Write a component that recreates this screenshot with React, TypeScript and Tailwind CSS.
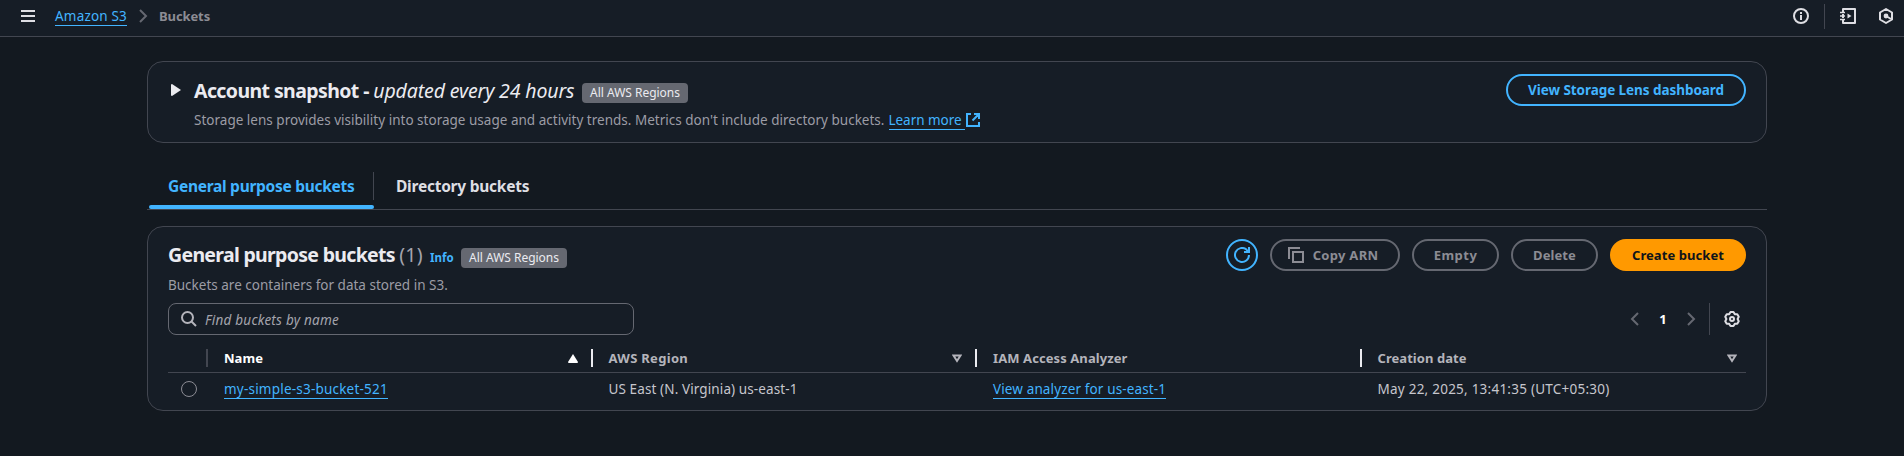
import React from "react";

const svg = "block shrink-0 fill-none stroke-current stroke-2";

function Badge() {
  return (
    <span className="flex h-5 w-[106px] items-center justify-center rounded bg-[#656871] text-xs tracking-[-0.02px] text-[#ebebf0]">
      All AWS Regions
    </span>
  );
}

function Chevron({ left }: { left?: boolean }) {
  return (
    <svg width="16" height="16" viewBox="0 0 16 16" className={svg}>
      <path d={left ? "M11 2 5 8l6 6" : "M5 2l6 6-6 6"} />
    </svg>
  );
}

function TopBar() {
  return (
    <header className="flex h-[37px] items-start justify-between border-b border-[#424650] bg-[#161d26]">
      <div className="flex h-8 items-center pl-5">
        <svg width="16" height="16" viewBox="0 0 16 16" className={`${svg} text-[#dedee3]`}>
          <path d="M1 3h14M1 8h14M1 13h14" />
        </svg>
        <a className="mt-[2px] ml-[19px] h-[18px] w-[72px] border-b border-[#42b4ff] text-[13.5px] leading-[16px] tracking-[0.19px] whitespace-nowrap text-[#42b4ff]">
          Amazon S3
        </a>
        <span className="ml-2 text-[#656871]"><Chevron /></span>
        <span className="ml-2 text-[13px] leading-5 font-bold tracking-[-0.1px] text-[#8c8c94]">Buckets</span>
      </div>
      <div className="flex h-8 items-center pr-[10px] text-[#dedee3]">
        <svg width="16" height="16" viewBox="0 0 16 16" className={svg}>
          <circle cx="8" cy="8" r="7" />
          <path d="M8 4v2M8 7v5" />
        </svg>
        <span className="mr-[15px] ml-[15px] h-[25px] w-px bg-[#424650]" />
        <svg width="16" height="16" viewBox="0 0 16 16" className={svg}>
          <path d="M3 4V1h12v14H3v-3M3 6v4" strokeLinejoin="round" />
          <path d="M0 4.5h5M0 8h5M0 11.5h5" strokeWidth="1.4" />
          <path d="M7.5 5.5v5l4-2.5z" className="fill-current stroke-none" />
        </svg>
        <svg width="16" height="16" viewBox="0 0 16 16" className={`${svg} ml-[22px]`}>
          <path d="M8 1l6 3.5v7L8 15l-6-3.5v-7z" strokeLinejoin="round" />
          <circle cx="8" cy="8" r="2.4" className="fill-current stroke-none" />
          <path d="M8 8l5 3" />
        </svg>
      </div>
    </header>
  );
}

function Snapshot() {
  return (
    <section className="flex h-[82px] justify-between rounded-2xl border border-[#424650] bg-[#161d26] pt-3 pr-5 pl-[23px]">
      <div className="flex">
        <svg width="10" height="12" viewBox="0 0 10 12" className="mt-[10px] mr-[13px] fill-[#ebebf0]">
          <path d="M1 0l9 6-9 6q-1 0-1-1V1q0-1 1-1z" />
        </svg>
        <div>
          <div className="flex h-[30px]">
            <h2 className="w-[388px] pt-[2px] text-[19.5px] leading-[30px] whitespace-nowrap text-[#ebebf0]">
              <span className="font-bold tracking-[-0.6px]">Account snapshot - </span>
              <em className="tracking-[-0.13px]">updated every 24 hours</em>
            </h2>
            <div className="pt-[9px]"><Badge /></div>
          </div>
          <p className="mt-[6px] flex text-[13.5px] leading-5 whitespace-nowrap text-[#9c9ca5]">
            <span className="w-[694.5px] tracking-[0.013px]">
              Storage lens provides visibility into storage usage and activity trends. Metrics don't include directory buckets.
            </span>
            <a className="flex text-[#42b4ff]">
              <span className="h-5 w-[76.5px] border-b border-[#42b4ff] tracking-[-0.04px]">Learn more</span>
              <svg width="16" height="16" viewBox="0 0 16 16" className={`${svg} mt-[2px]`}>
                <path d="M6 2H2v12h12v-4M9 2h5v5M14 2 7.5 8.5" />
              </svg>
            </a>
          </p>
        </div>
      </div>
      <button className="h-8 w-60 rounded-full border-2 border-[#42b4ff] text-[13.5px] font-bold tracking-[-0.06px] text-[#42b4ff]">
        View Storage Lens dashboard
      </button>
    </section>
  );
}

function Tabs() {
  return (
    <nav className="mt-[25px] flex h-[42px] border-b border-[#424650] text-[15.5px] leading-6 font-bold whitespace-nowrap">
      <div className="flex w-[227px] flex-col justify-between pl-[2px]">
        <div className="mt-[4px] flex h-7 items-center border-r border-[#424650] pl-[19px] tracking-[-0.28px] text-[#42b4ff]">
          General purpose buckets
        </div>
        <div className="h-1 rounded bg-[#42b4ff]" />
      </div>
      <div className="mt-[6px] ml-[22px] tracking-[-0.24px] text-[#dedee3]">Directory buckets</div>
    </nav>
  );
}

function Sort({ up }: { up?: boolean }) {
  return up ? (
    <svg width="10" height="9" viewBox="0 0 10 9" className="fill-white">
      <path d="M5 0l5 8-.5 1h-9L0 8z" />
    </svg>
  ) : (
    <svg width="10" height="9" viewBox="0 0 10 9" className="fill-none stroke-[#b4b4bb] stroke-2">
      <path d="M1.500 1.500h7L5 7z" />
    </svg>
  );
}

type ColumnProps = {
  title: string;
  spacing: string;
  sort?: "up" | "down";
  active?: boolean;
  last?: boolean;
};

function Column({ title, sort, active, spacing, last }: ColumnProps) {
  return (
    <div className="flex h-[18px] w-[384.5px] items-center justify-between pl-4">
      <span className={`text-[13px] leading-[18px] font-bold ${spacing} ${active ? "text-white" : "text-[#b4b4bb]"}`}>{title}</span>
      <span className="flex items-center">
        {sort && <Sort up={sort === "up"} />}
        <span className={last ? "w-[9px]" : "ml-[13px] h-[18px] w-[2px] bg-[#ebebf0]"} />
      </span>
    </div>
  );
}

const grey = "flex h-8 items-center justify-center rounded-full border-2 border-[#656871] text-[#8c8c94]";
const cellLink = "block h-5 w-fit border-b border-[#42b4ff] text-[#42b4ff]";

function Buckets() {
  return (
    <section className="mt-4 h-[185px] rounded-2xl border border-[#424650] bg-[#161d26] px-5 pt-3">
      <div className="flex h-[64px] justify-between">
        <div>
          <div className="flex h-[30px] whitespace-nowrap">
            <h2 className="w-[262px] pt-[1px] text-[19.5px] leading-[30px] text-[#ebebf0]">
              <span className="font-bold tracking-[-0.69px]">General purpose buckets </span>
              <span className="tracking-[0.2px] text-[#a4a4ad]">(1)</span>
            </h2>
            <span className="mt-[10px] w-[31px] text-[11.5px] leading-[18px] font-bold text-[#42b4ff]">Info</span>
            <div className="pt-[9px]"><Badge /></div>
          </div>
          <p className="mt-[6px] text-[13.5px] leading-5 text-[#9c9ca5]">Buckets are containers for data stored in S3.</p>
        </div>
        <div className="flex gap-3 text-[13px] font-bold whitespace-nowrap">
          <button className="flex size-8 items-center justify-center rounded-full border-2 border-[#42b4ff] text-[#42b4ff]">
            <svg width="16" height="16" viewBox="0 0 16 16" className={svg}>
              <path d="M15 8a7 7 0 1 1-2.5-5.4L14 4.5M15 0v5h-5" />
            </svg>
          </button>
          <button className={`${grey} w-[130px] gap-[9px] pr-1`}>
            <svg width="16" height="16" viewBox="0 0 16 16" className={svg}>
              <path d="M5 5h10v10H5zM1 12V1h11" />
            </svg>
            <span className="pt-[2px] tracking-[0.3px]">Copy ARN</span>
          </button>
          <button className={`${grey} w-[87px] pt-[2px] tracking-[0.5px]`}>Empty</button>
          <button className={`${grey} w-[87px] pt-[2px] tracking-[0.1px]`}>Delete</button>
          <button className="h-8 w-[136px] rounded-full bg-[#ff9900] pt-[2px] tracking-[0.07px] text-[#0f141a]">Create bucket</button>
        </div>
      </div>
      <div className="flex h-8 justify-between">
        <div className="flex w-[466px] items-center rounded-lg border border-[#656871] pl-3 text-[#a4a4ad]">
          <svg width="16" height="16" viewBox="0 0 16 16" className={`${svg} text-[#b4b4bb]`}>
            <circle cx="6.5" cy="6.5" r="5.5" />
            <path d="M10.5 10.5 15 15" />
          </svg>
          <span className="ml-2 pt-[2px] text-[13.5px] leading-5 tracking-[0.24px] italic">Find buckets by name</span>
        </div>
        <div className="flex items-center pr-[6px] text-[#656871]">
          <Chevron left />
          <span className="w-[40px] pt-[2px] text-center text-[13px] font-bold text-white">1</span>
          <Chevron />
          <span className="mr-[14px] ml-[10px] h-8 w-px bg-[#424650]" />
          <svg width="16" height="16" viewBox="0 0 16 16" className={`${svg} text-[#dedee3]`}>
            <path
              d="M6.52 1.06H9.48L10.8 3.15 13.28 3.25 14.75 5.81 13.6 8 14.75 10.19 13.28 12.75 10.8 12.85 9.48 14.94H6.52L5.2 12.85 2.72 12.75 1.25 10.19 2.4 8 1.25 5.81 2.72 3.25 5.2 3.15z"
              strokeLinejoin="round"
            />
            <circle cx="8" cy="8" r="2" />
          </svg>
        </div>
      </div>
      <div className="flex h-[38px] items-center border-b border-[#424650] pt-[9px]">
        <div className="h-[18px] w-10 border-r-2 border-[#424650]" />
        <Column title="Name" sort="up" active spacing="tracking-[0.04px]" />
        <Column title="AWS Region" sort="down" spacing="tracking-[0.3px]" />
        <Column title="IAM Access Analyzer" spacing="tracking-[0.09px]" />
        <Column title="Creation date" sort="down" spacing="tracking-[0.05px]" last />
      </div>
      <div className="flex h-8 items-center text-[13.5px] leading-5 text-[#c6c6cd]">
        <div className="flex w-10 pl-[13px]">
          <span className="size-4 rounded-full border border-[#8c8c94]" />
        </div>
        <div className="w-[384.5px] pl-4"><a className={`${cellLink} tracking-[0.21px]`}>my-simple-s3-bucket-521</a></div>
        <div className="w-[384.5px] pl-4 tracking-[0.11px]">US East (N. Virginia) us-east-1</div>
        <div className="w-[384.5px] pl-4"><a className={`${cellLink} tracking-[0.13px]`}>View analyzer for us-east-1</a></div>
        <div className="pl-4 tracking-[0.24px]">May 22, 2025, 13:41:35 (UTC+05:30)</div>
      </div>
    </section>
  );
}

export default function App() {
  return (
    <div className="h-[456px] w-[1904px] overflow-hidden bg-[#131920] font-['Noto_Sans','Open_Sans',sans-serif]">
      <TopBar />
      <main className="mt-6 ml-[147px] w-[1620px]">
        <Snapshot />
        <Tabs />
        <Buckets />
      </main>
    </div>
  );
}
